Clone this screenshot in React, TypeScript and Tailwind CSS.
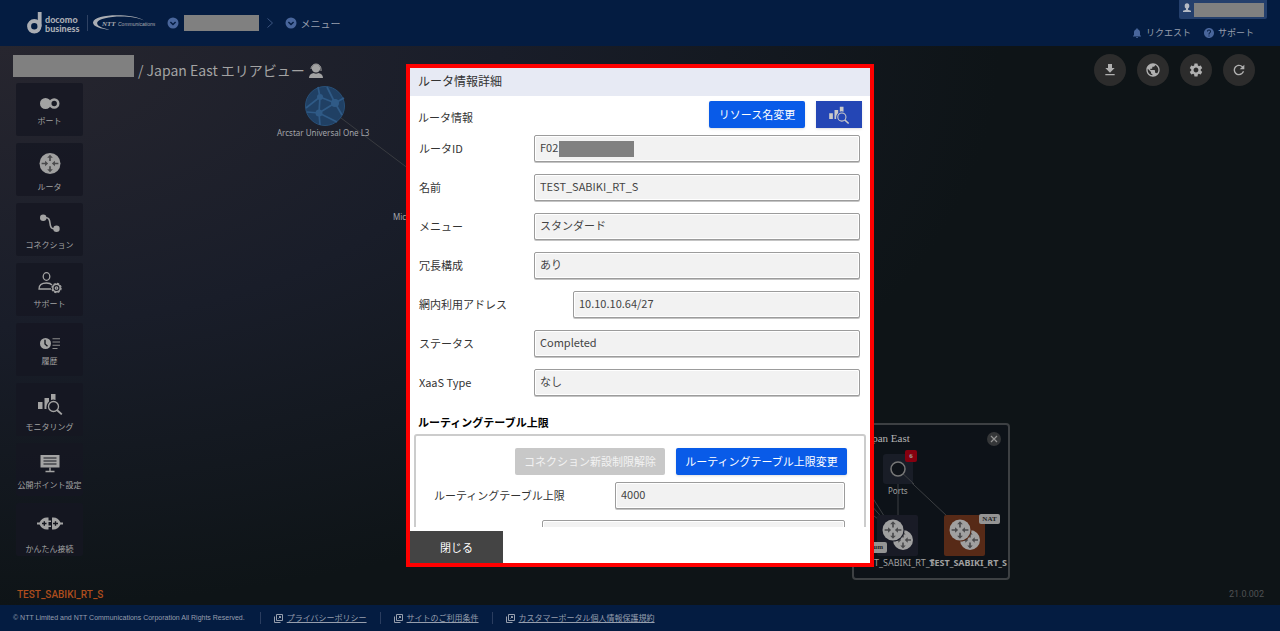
import type { ReactNode } from 'react';
import { MdDownload, MdPublic, MdSettings, MdRefresh, MdNotifications, MdHelp } from 'react-icons/md';

const FIELDS = [
  { id: 'name', label: '名前', value: 'TEST_SABIKI_RT_S' },
  { id: 'menu', label: 'メニュー', value: 'スタンダード' },
  { id: 'redundancy', label: '冗長構成', value: 'あり' },
  { id: 'address', label: '網内利用アドレス', value: '10.10.10.64/27', narrow: true },
  { id: 'status', label: 'ステータス', value: 'Completed' },
  { id: 'xaas', label: 'XaaS Type', value: 'なし' },
];

const FOOTER_LINKS = ['プライバシーポリシー', 'サイトのご利用条件', 'カスタマーポータル個人情報保護規約'];

const inputClass =
  'h-[27px] w-full rounded-[2px] border border-[#9c9c9c] bg-[#f2f2f2] px-[5px] pb-[3px] text-[11px] text-[#444] shadow-[inset_0_0_0_1px_#fff,0_1px_0_#c4c4c4] outline-none';

function ChevronCircle() {
  return (
    <svg viewBox="0 0 12 12" className="size-3 shrink-0">
      <circle cx="6" cy="6" r="5.5" fill="#49669c" />
      <path d="M3.4 5 6 7.5 8.6 5" fill="none" stroke="#041c41" strokeWidth="1.5" />
    </svg>
  );
}

function DocomoLogo() {
  return (
    <div className="flex items-center text-[#aaadb3]">
      <svg viewBox="0 0 16 22" className="h-[22px] w-4">
        <circle cx="7.3" cy="14.3" r="5.2" fill="none" stroke="currentColor" strokeWidth="4" />
        <path d="M10.8 0h3.8v14.5h-3.8z" fill="currentColor" />
      </svg>
      <div className="ml-[2px] pt-[2px] font-['Lato'] text-[9px] leading-[9px] font-black">
        <div>docomo</div>
        <div>business</div>
      </div>
    </div>
  );
}

function NttLogo() {
  return (
    <svg viewBox="0 0 63 18" className="h-[18px] w-[63px] overflow-visible">
      <path d="M52 6.5C42-.5 2-1 1 8.500c-.2 3.800 7.500 6.500 17 7.300C9 14 4.500 11.500 5.200 8.500 7 2.300 38-.5 52 6.500z" fill="#aaadb3" />
      <path d="M50 6.300C38 1.500 9 2.500 7.500 8.500c-.4 2.200 2 4.300 6 5.700C-3 8 15 2.500 30 3c9 .2 15 1.500 20 3.300z" fill="#041c41" />
      <text x="10" y="12" fontSize="7" fontWeight="900" fontStyle="italic" fontFamily="Liberation Serif, serif" fill="#aaadb3">
        NTT
      </text>
      <text x="26" y="12" fontSize="5" fontStyle="italic" fontFamily="Liberation Sans, sans-serif" fill="#aaadb3">
        Communications
      </text>
    </svg>
  );
}

function RouterGlyph({ cx, cy, r }: { cx: number; cy: number; r: number }) {
  return (
    <g transform={`translate(${cx} ${cy}) scale(${r / 10})`}>
      <circle r="10" fill="#a0a0a0" />
      {[0, 180].map((a) => (
        <path key={a} transform={`rotate(${a})`} d="M0-8.400-2.700-5.500H-.8V-2.500H.8V-5.500H2.700z" fill="#4a4a4c" />
      ))}
      {[90, 270].map((a) => (
        <path key={a} transform={`rotate(${a})`} d="M0-1.800-2.700-4.700H-.8V-8H.8V-4.700H2.700z" fill="#4a4a4c" />
      ))}
    </g>
  );
}

function MonitorGlyph({ className }: { className?: string }) {
  return (
    <svg viewBox="0 0 26 22" className={className} fill="none" stroke="currentColor">
      <path d="M1 9h4.500v7H1zM7.500 5H12v3.500Q9 11 9.500 16h-2zM14 1h4.500v6Q16 6 14 7z" fill="currentColor" stroke="none" />
      <circle cx="16.500" cy="13.500" r="5" strokeWidth="1.300" />
      <path d="m20 17 4.800 4.400" strokeWidth="1.800" />
    </svg>
  );
}

const MENU: { label: string; icon: ReactNode }[] = [
  {
    label: 'ポート',
    icon: (
      <svg viewBox="0 0 20 23" className="h-[23px] w-5">
        <circle cx="5.500" cy="11.500" r="5.500" fill="#a3a3a3" />
        <circle cx="14.200" cy="11.500" r="4" fill="#181a24" stroke="#a3a3a3" strokeWidth="2.600" />
      </svg>
    ),
  },
  {
    label: 'ルータ',
    icon: (
      <svg viewBox="0 0 22 35" className="h-[35px] w-[22px]">
        <RouterGlyph cx={11} cy={17.5} r={10.5} />
      </svg>
    ),
  },
  {
    label: 'コネクション',
    icon: (
      <svg viewBox="0 0 20 31" className="h-[31px] w-5">
        <circle cx="3.200" cy="9.800" r="3.200" fill="#a3a3a3" />
        <circle cx="16.500" cy="20.800" r="3.200" fill="#a3a3a3" />
        <path d="M3 9.800h3.500c6 0 1 11 7 11H16" fill="none" stroke="#a3a3a3" strokeWidth="1.600" />
      </svg>
    ),
  },
  {
    label: 'サポート',
    icon: (
      <svg viewBox="0 0 24 29" className="h-[29px] w-6" fill="none" stroke="#a3a3a3" strokeWidth="1.300">
        <ellipse cx="8.500" cy="7.500" rx="3.300" ry="3.800" />
        <path d="M13 20H1c0-4 3-6 7.500-6 2.500 0 4.500.8 5.500 2" />
        <circle cx="18.500" cy="19" r="3.700" strokeWidth="1.500" />
        <circle cx="18.500" cy="19" r="4.600" strokeWidth="1.200" strokeDasharray="2.200 1.410" />
        <circle cx="18.500" cy="19" r="1.200" />
      </svg>
    ),
  },
  {
    label: '履歴',
    icon: (
      <svg viewBox="0 0 20 23" className="h-[23px] w-5">
        <circle cx="5.500" cy="11.500" r="5.500" fill="#a3a3a3" />
        <path d="M5 7.800v4.200l2.500 2.200" fill="none" stroke="#15171f" strokeWidth="1.400" />
        <path d="M12.500 6.800H20M12.500 10H20M12.500 13.200H20M12.500 16.500h5" stroke="#8a8a8a" strokeWidth="1.100" />
      </svg>
    ),
  },
  {
    label: 'モニタリング',
    icon: (
      <span className="flex h-[35px] items-center">
        <MonitorGlyph className="h-[22px] w-[26px]" />
      </span>
    ),
  },
  {
    label: '公開ポイント設定',
    icon: (
      <svg viewBox="0 0 20 31" className="h-[31px] w-5">
        <path d="M.5 7h19v12.500H.5z" fill="#a3a3a3" />
        <path d="M3.500 10h13M3.500 13h13M3.500 16h13" stroke="#15171f" strokeWidth="1.100" />
        <path d="M10 19.500V23M5.500 23.500h9" stroke="#a3a3a3" strokeWidth="1.400" />
      </svg>
    ),
  },
  {
    label: 'かんたん接続',
    icon: (
      <svg viewBox="0 0 26 39" className="h-[39px] w-[26px]">
        <path d="M0 18.500h2.500Q5 13.500 10 13.500h1.500v3H14v1.500h-2.500v3.500H14V23h-2.500v2.500H10q-5 0-7.500-5H0z" fill="#a3a3a3" />
        <path d="M26 18.500h-2.500q-2.500-5-7-5H15v12h1.500q4.500 0 7-5H26z" fill="#a3a3a3" />
        <path d="M5 19.500h4.500M7.300 17.300v4.400M16 19.500h5M18.500 17.300v4.400" stroke="#15171f" strokeWidth="1.400" />
      </svg>
    ),
  },
];

const TOOLS = [
  { label: 'ダウンロード', Icon: MdDownload },
  { label: '言語', Icon: MdPublic },
  { label: '設定', Icon: MdSettings },
  { label: '更新', Icon: MdRefresh },
];

function Header() {
  return (
    <header className="flex h-[46px] items-center justify-between bg-[#041c41] pr-[13px] pl-[27px] text-[#969ead]">
      <div className="flex items-center">
        <DocomoLogo />
        <span className="mr-1 ml-2 h-4 w-px bg-[#2f4263]" />
        <NttLogo />
        <div className="ml-3 flex items-center gap-[5px]">
          <ChevronCircle />
          <span className="h-4 w-[75px] bg-[#808080]" />
        </div>
        <svg viewBox="0 0 6 10" className="mx-2 h-2.5 w-1.5" fill="none" stroke="#3c5580">
          <path d="m.5.5 5 4.500-5 4.500" />
        </svg>
        <button className="ml-1 flex items-center gap-[3px] text-[10px]">
          <ChevronCircle />
          メニュー
        </button>
      </div>
      <div className="flex h-full flex-col items-end">
        <div className="flex h-[19px] items-center gap-[3px] rounded-b-[2px] bg-[#243f6c] pr-[3px] pl-1">
          <svg viewBox="0 0 8 10" className="mb-1 h-2.5 w-2" fill="#b5bac4">
            <ellipse cx="4" cy="3" rx="2.300" ry="2.800" />
            <path d="M3 5h2v1.800l3 1V9H0V7.800l3-1z" />
          </svg>
          <span className="h-[14px] w-[70px] bg-[#808080]" />
        </div>
        <nav className="mt-[7px] mr-[13px] flex gap-3 text-[9px]">
          <a href="#request" className="flex items-center gap-[3px]">
            <MdNotifications className="size-3 text-[#49669c]" />
            リクエスト
          </a>
          <a href="#support" className="flex items-center gap-[3px]">
            <MdHelp className="size-3 text-[#49669c]" />
            サポート
          </a>
        </nav>
      </div>
    </header>
  );
}

function AreaPanel() {
  return (
    <section className="absolute top-[377px] left-[852px] h-[157px] w-[158px] rounded-[4px] border-2 border-[#3d4043] bg-[#0d1218] font-['Noto_Sans'] text-[8px] text-[#a0a0a0]">
      <svg viewBox="0 0 153 153" className="absolute top-0 left-px size-[153px]">
        <path d="M43 45v60M43 45l66 62M0 45l38 60M0 62l38 43M0 77l38 28" stroke="#3c3f42" />
        <rect x="28" y="29" width="30" height="30" rx="3" fill="#191d27" />
        <path d="m43 44 16 15" stroke="#3c3f42" />
        <circle cx="43" cy="44" r="7" fill="#0f1319" stroke="#777" strokeWidth="1.500" />
        <rect x="22" y="90" width="41" height="41" rx="2" fill="#191b26" />
        <rect x="89" y="90" width="41" height="41" rx="2" fill="#572a17" />
        <RouterGlyph cx={48} cy={115} r={10} />
        <circle cx="38" cy="105" r="11.500" fill="#191b26" />
        <RouterGlyph cx={38} cy={105} r={10.5} />
        <RouterGlyph cx={115} cy={115} r={10} />
        <circle cx="105" cy="105" r="11.500" fill="#572a17" />
        <RouterGlyph cx={105} cy={105} r={10.5} />
      </svg>
      <h2 className="absolute top-[5px] left-[9px] font-['Liberation_Serif'] text-[11px] leading-4 text-[#b4b4b4]">Japan East</h2>
      <button aria-label="閉じる" className="absolute top-[7px] right-[7px] grid size-[14px] place-items-center rounded-full bg-[#343638]">
        <svg viewBox="0 0 8 8" className="size-2" stroke="#929292" strokeWidth="1.200">
          <path d="m1 1 6 6M7 1 1 7" />
        </svg>
      </button>
      <span className="absolute top-[25px] left-[51px] grid size-3 place-items-center rounded-[2px] bg-[#86000f] font-['Liberation_Serif'] text-[7px] font-bold">6</span>
      <span className="absolute top-[60px] left-[34px] leading-3">Ports</span>
      <span className="absolute top-[117px] left-px w-8 rounded-[2px] bg-[#949494] pr-1 text-right font-['Liberation_Serif'] text-[7px] leading-[11px] font-bold text-[#222]">Premium</span>
      <span className="absolute top-[89px] left-[125px] w-[21px] rounded-[2px] bg-[#949494] text-center font-['Liberation_Serif'] text-[7px] leading-[10px] font-bold text-[#222]">NAT</span>
      <span className="absolute top-[132px] left-[5px] text-[9px] leading-3">TEST_SABIKI_RT_S</span>
      <span className="absolute top-[132px] right-px text-[9px] leading-3 font-bold">TEST_SABIKI_RT_S</span>
    </section>
  );
}

function Topology() {
  return (
    <div className="absolute inset-0 overflow-hidden font-['Noto_Sans'] text-[8px] text-[#a3a5aa]">
      <svg className="absolute inset-0 size-full">
        <path d="M325 60 893 486" stroke="#3a3c40" />
        <g transform="translate(325 60)">
          <circle r="19.500" fill="#204064" stroke="#285078" />
          <path
            d="M-7-19-5-9-19 2M-5-9 10-3 2-19M10-3 19-8M10-3 17 9M10-3-6 7-5-9M-6 7-18 6M-6 7-5 19M-6 7 12 16"
            fill="none"
            stroke="#2f5a86"
            strokeWidth="1.700"
          />
          <circle cx="-5" cy="-9" r="3" fill="#2f5a86" />
          <circle cx="10" cy="-3" r="4" fill="#2f5a86" />
          <circle cx="-6" cy="7" r="3.500" fill="#2f5a86" />
        </g>
      </svg>
      <span className="absolute top-[81px] left-[277px] leading-3">Arcstar Universal One L3</span>
      <span className="absolute top-[165px] left-[393px] leading-3">Microsoft</span>
      <AreaPanel />
    </div>
  );
}

function RouterDialog() {
  return (
    <div className="fixed inset-0 flex items-center justify-center">
      <div
        role="dialog"
        aria-labelledby="dialog-title"
        className="flex max-h-[calc(100vh-128px)] w-[468px] flex-col border-4 border-[#ff0000] bg-white text-[11px] text-[#333]"
      >
        <h2 id="dialog-title" className="h-7 shrink-0 bg-[#e7eaf4] px-2 text-[12px] leading-[26px]">
          ルータ情報詳細
        </h2>
        <div className="min-h-0 flex-1 overflow-y-auto [scrollbar-width:none]">
          <div className="flex h-8 items-start justify-between px-2 pt-[5px]">
            <h3 className="leading-8">ルータ情報</h3>
            <div className="flex gap-[11px]">
              <button className="h-[27px] w-24 rounded-[2px] bg-[#095be8] text-white shadow-sm">リソース名変更</button>
              <button aria-label="モニタリング" className="grid h-[27px] w-[46px] place-items-center bg-[#2446b5] text-[#c9c9c9] shadow-sm">
                <MonitorGlyph className="h-[18px] w-[22px]" />
              </button>
            </div>
          </div>

          <div className="flex flex-col gap-3 pt-[7px] pr-[10px] pl-[9px]">
            <div className="flex items-center">
              <label htmlFor="router-id" className="w-[115px]">
                ルータID
              </label>
              <div className="relative flex-1">
                <input id="router-id" className={inputClass} value="F02" readOnly />
                <span className="absolute top-[6px] left-[25px] h-4 w-[75px] bg-[#808080]" />
              </div>
            </div>
            {FIELDS.map((f) => (
              <div key={f.id} className="flex items-center">
                <label htmlFor={f.id} className={f.narrow ? 'w-[154px] shrink-0' : 'w-[115px] shrink-0'}>
                  {f.label}
                </label>
                <input id={f.id} className={inputClass} value={f.value} readOnly />
              </div>
            ))}
          </div>

          <h3 className="mt-4 pl-2 leading-5 font-bold text-black">ルーティングテーブル上限</h3>
          <div className="mx-1 mt-[2px] rounded-[3px] border-2 border-[#ccc] pt-3 pr-[19px] pb-3 pl-[18px]">
            <div className="-mr-[2px] flex justify-end gap-[11px]">
              <button disabled className="h-[27px] w-[150px] rounded-[2px] bg-[#c8c8c8] text-[#f2f2f2]">
                コネクション新設制限解除
              </button>
              <button className="h-[27px] w-[171px] rounded-[2px] bg-[#095be8] text-white shadow-sm">ルーティングテーブル上限変更</button>
            </div>
            <div className="mt-[7px] flex items-center">
              <label htmlFor="table-limit" className="w-[181px] shrink-0">
                ルーティングテーブル上限
              </label>
              <input id="table-limit" className={inputClass} value="4000" readOnly />
            </div>
            <div className="mt-[11px] flex pl-[108px]">
              <input aria-label="ルート数" className={inputClass} readOnly />
            </div>
          </div>
        </div>
        <div className="shrink-0 pt-1">
          <button className="h-8 w-[93px] bg-[#444] text-white">閉じる</button>
        </div>
      </div>
    </div>
  );
}

export default function App() {
  return (
    <div className="flex min-h-screen flex-col bg-[#0e1417] font-['Noto_Sans_CJK_JP',sans-serif]">
      <Header />
      <main className="relative flex-1 bg-[radial-gradient(1000px_560px_at_0_0,#27262f,#191d29_50%,#0e1417)] text-[#a3a3a3]">
        <Topology />
        <div className="relative flex items-start justify-between pt-2 pr-[25px] pl-[13px]">
          <h1 className="flex h-8 items-center text-[14px]">
            <span className="mb-2 h-[22px] w-[121px] bg-[#808080]" />
            <span className="ml-1">/ Japan East エリアビュー</span>
            <svg viewBox="0 0 14 15" className="ml-1 h-[15px] w-3.5" fill="#a3a3a3">
              <circle cx="7" cy="5.500" r="4.200" />
              <path d="M2 6a5 5 0 0 1 10 0v2" fill="none" stroke="#a3a3a3" />
              <path d="M0 15c0-3 2-4.500 5-5h4c3 .5 5 2 5 5z" />
              <path d="M3.500 8.500Q7 12 10.500 8.500" fill="none" stroke="#23242d" />
            </svg>
          </h1>
          <div className="flex gap-[11px]">
            {TOOLS.map(({ label, Icon }) => (
              <button key={label} aria-label={label} className="grid size-8 place-items-center rounded-full bg-[#2c2c2c] text-[#b0b0b0]">
                <Icon className="size-4" />
              </button>
            ))}
          </div>
        </div>
        <nav className="relative -mt-[3px] ml-4 flex w-[67px] flex-col gap-[7px]">
          {MENU.map((m) => (
            <button key={m.label} className="flex h-[53px] flex-col items-center justify-center rounded-[2px] bg-[#151722]/80">
              {m.icon}
              <span className="text-[8px] leading-3 whitespace-nowrap">{m.label}</span>
            </button>
          ))}
        </nav>
        <div className="relative mt-[31px] flex items-center justify-between pr-4 pl-[17px]">
          <span className="font-['Roboto'] text-[10px] leading-4 font-medium text-[#ad4d1d]">TEST_SABIKI_RT_S</span>
          <span className="font-['Roboto'] text-[9px] text-[#4e5153]">21.0.002</span>
        </div>
      </main>
      <footer className="flex h-[26px] items-center bg-[#041c41] pl-[13px] text-[8px] text-[#969ead]">
        <small className="mr-[2px] font-['Liberation_Sans'] text-[7px]">© NTT Limited and NTT Communications Corporation All Rights Reserved.</small>
        {FOOTER_LINKS.map((text) => (
          <div key={text} className="ml-[13px] flex items-center border-l border-[#2a3d5f] pl-[13px]">
            <svg viewBox="0 0 9 9" className="mr-1 size-[9px]" fill="none" stroke="#969ead">
              <path d="M2.500.5h6v6h-6zM.5 2.500v6h6M4.500 4.500l2-2M5 2.500h1.500V4" />
            </svg>
            <a href="#terms" className="underline underline-offset-1">
              {text}
            </a>
          </div>
        ))}
      </footer>
      <RouterDialog />
    </div>
  );
}
